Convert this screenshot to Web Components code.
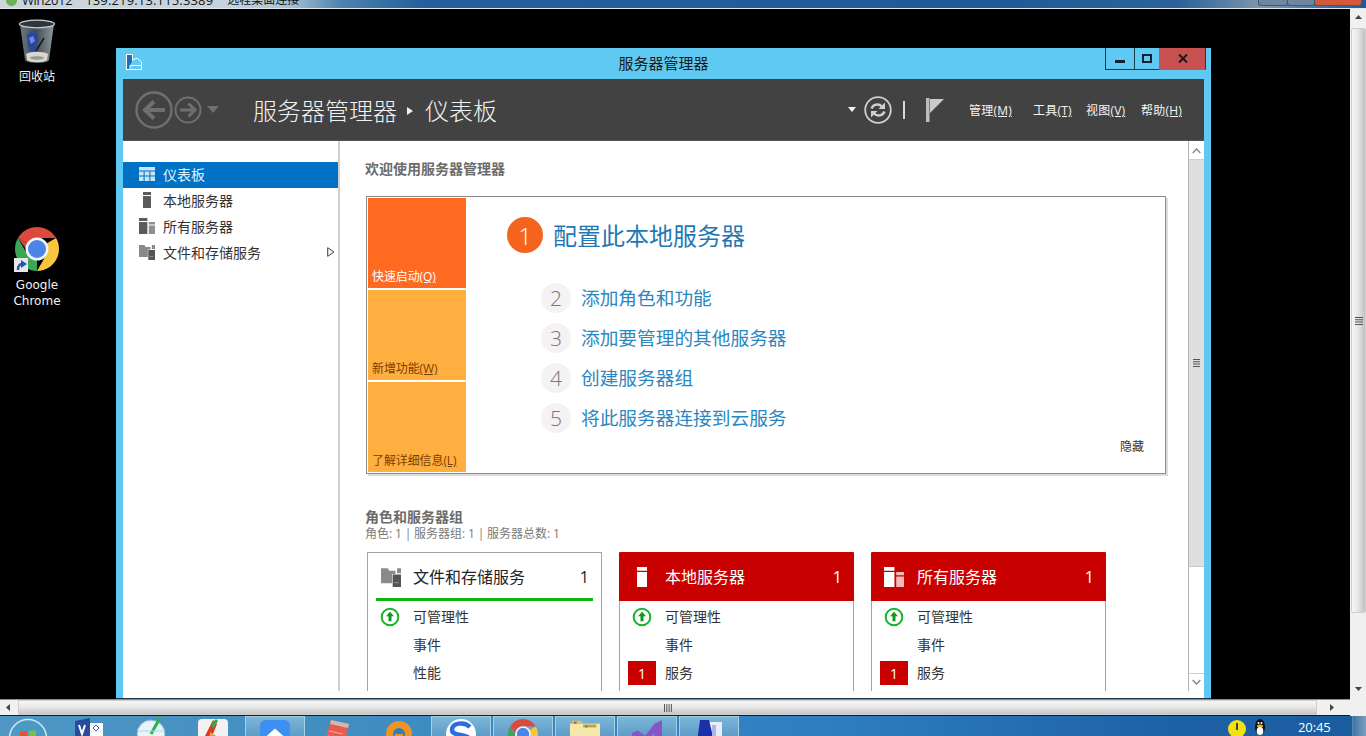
<!DOCTYPE html>
<html lang="zh-CN">
<head>
<meta charset="utf-8">
<title>服务器管理器</title>
<style>
html,body{margin:0;padding:0;background:#000;overflow:hidden}
body{font-family:"Open Sans","Noto Sans CJK SC",sans-serif}
</style>
</head>
<body>
<x-screen>
  <x-rdp-bar slot="top">
    <span>Win2012</span><span>139.219.13.115:3389</span><span>远程桌面连接</span>
  </x-rdp-bar>

  <x-desktop slot="desktop">
    <x-desktop-icon icon="bin" style="left:2px;top:8px" width="70">回收站</x-desktop-icon>
    <x-desktop-icon icon="chrome" shortcut style="left:2px;top:214px" width="70">Google<br>Chrome</x-desktop-icon>

    <x-window title-text="服务器管理器">
      <x-app-header>
        <span slot="a">服务器管理器</span>
        <span slot="b">仪表板</span>
        <x-menu-item slot="menu" w="64">管理<u>(M)</u></x-menu-item>
        <x-menu-item slot="menu" w="53">工具<u>(T)</u></x-menu-item>
        <x-menu-item slot="menu" w="55">视图<u>(V)</u></x-menu-item>
        <x-menu-item slot="menu" w="44">帮助<u>(H)</u></x-menu-item>
      </x-app-header>
      <x-app-body>
        <x-sidebar slot="side">
          <x-nav-item icon="grid" selected>仪表板</x-nav-item>
          <x-nav-item icon="server">本地服务器</x-nav-item>
          <x-nav-item icon="servers">所有服务器</x-nav-item>
          <x-nav-item icon="files" arrow>文件和存储服务</x-nav-item>
        </x-sidebar>
        <x-dashboard slot="main">
          <x-welcome>
            <x-tile slot="tiles" kind="hot">快速启动<u>(Q)</u></x-tile>
            <x-tile slot="tiles">新增功能<u>(W)</u></x-tile>
            <x-tile slot="tiles">了解详细信息<u>(L)</u></x-tile>
            <x-step slot="steps" n="1" primary>配置此本地服务器</x-step>
            <x-step slot="steps" n="2">添加角色和功能</x-step>
            <x-step slot="steps" n="3">添加要管理的其他服务器</x-step>
            <x-step slot="steps" n="4">创建服务器组</x-step>
            <x-step slot="steps" n="5">将此服务器连接到云服务</x-step>
          </x-welcome>
          <x-role-card slot="cards" icon="files" count="1" heading="文件和存储服务">
            <x-card-row status="up">可管理性</x-card-row>
            <x-card-row>事件</x-card-row>
            <x-card-row>性能</x-card-row>
          </x-role-card>
          <x-role-card slot="cards" icon="server" count="1" heading="本地服务器" alert>
            <x-card-row status="up">可管理性</x-card-row>
            <x-card-row>事件</x-card-row>
            <x-card-row badge="1">服务</x-card-row>
          </x-role-card>
          <x-role-card slot="cards" icon="servers" count="1" heading="所有服务器" alert>
            <x-card-row status="up">可管理性</x-card-row>
            <x-card-row>事件</x-card-row>
            <x-card-row badge="1">服务</x-card-row>
          </x-role-card>
        </x-dashboard>
        <x-win-scroll slot="scroll"></x-win-scroll>
      </x-app-body>
    </x-window>
  </x-desktop>

  <x-outer-vscroll slot="vscroll"></x-outer-vscroll>
  <x-outer-hscroll slot="hscroll"></x-outer-hscroll>

  <x-taskbar slot="taskbar">
    <x-task icon="visio" slot="tasks"></x-task>
    <x-task icon="ball" slot="tasks"></x-task>
    <x-task icon="play" slot="tasks"></x-task>
    <x-task icon="diamond" slot="tasks" active></x-task>
    <x-task icon="note" slot="tasks"></x-task>
    <x-task icon="orange" slot="tasks"></x-task>
    <x-task icon="sogou" slot="tasks" active></x-task>
    <x-task icon="chrome" slot="tasks" active></x-task>
    <x-task icon="folder" slot="tasks" active></x-task>
    <x-task icon="vs" slot="tasks" active></x-task>
    <x-task icon="bluebox" slot="tasks" active></x-task>
    <span slot="clock">20:45</span>
  </x-taskbar>
</x-screen>

<script>
const FONT = '"Open Sans","Noto Sans CJK SC",sans-serif';
const CHROME = `<svg viewBox="2 2 44 44" width="100%" height="100%">
<path fill="#db4a3c" d="M4.95 13A22 22 0 0 1 43.05 13H24A11 11 0 0 0 14.47 18.5Z"/>
<path fill="#f6c63f" d="M43.05 13A22 22 0 0 1 24 46L33.53 29.5A11 11 0 0 0 33.53 18.5Z"/>
<path fill="#3aa757" d="M24 46A22 22 0 0 1 4.95 13L14.47 29.5A11 11 0 0 0 24 35Z"/>
<path fill="#db4a3c" d="M4.95 13L14.47 18.5L13 24Z"/>
<circle cx="24" cy="24" r="11.5" fill="#f4f4f4"/><circle cx="24" cy="24" r="9" fill="#4a86e8"/></svg>`;

const ICONS = {
  grid:()=>`<svg viewBox="0 0 16 14" width="16" height="14"><path fill="#c4e6f8" d="M0 0h16v3.4H0zM0 4.4h4.6v4.2H0zM5.600 4.400h4.800v4.200H5.600zM11.400 4.400H16v4.200h-4.600zM0 9.600h4.600V14H0zM5.600 9.600h4.800V14H5.600zM11.400 9.600H16V14h-4.600z"/></svg>`,
  server:(c,w=16,h=16)=>`<svg viewBox="0 0 16 16" width="${w}" height="${h}"><path fill="${c||'#5b5b5b'}" d="M4 0h8v3H4zM4 4h8v12H4z"/></svg>`,
  servers:(c,d,w=16,h=16)=>`<svg viewBox="0 0 18 16" width="${w}" height="${h}" preserveAspectRatio="none"><path fill="${c||'#5b5b5b'}" d="M0 0h9.400v3H0zM0 4h9.400v12H0z"/><path fill="${d||'#8f8f8f'}" d="M11 4h7v2.600h-7zM11 7.600h7V16h-7z"/></svg>`,
  files:(w=16,h=16)=>`<svg viewBox="0 0 18 16" width="${w}" height="${h}" preserveAspectRatio="none"><path fill="#8a8a8a" d="M0 1h6l1.600 2H13v2.500H10V13H0z"/><path fill="#555" d="M10.500 6H18v10h-7.500z"/><path fill="#8a8a8a" d="M14.500 1H18v4h-3.500z"/><path fill="#8a8a8a" d="M12 12h4v1h-4z"/></svg>`,
  bin:()=>`<svg viewBox="0 0 36 46" width="36" height="46">
    <defs><linearGradient id="g" x1="0" x2="1"><stop offset="0" stop-color="#6e7a82"/><stop offset=".45" stop-color="#3f4a52"/><stop offset="1" stop-color="#8d989e"/></linearGradient></defs>
    <path fill="url(#g)" d="M1 5 6 41c1 4 23 4 24 0L35 5z"/>
    <ellipse cx="18" cy="5" rx="17.500" ry="3.800" fill="#2e363c" stroke="#c9d2d6" stroke-width="1.200"/>
    <path fill="#2a479f" d="M8 16l5-4 5 3 2 6-3 4-1 7-5 1-2-7z"/>
    <path fill="#6f8ddc" d="M10 19l4-2 2 5-4 3z"/>
    <path stroke="#14181b" stroke-width="1.500" d="M17 32l8-13" fill="none"/>
    <path fill="#d8d6cf" d="M7 35c4-3 18-3 22 0l-1 6c-2 3-18 3-20 0z"/>
    <path fill="#9a9a94" d="M11 38c4-1 10-1 14 0l-1 2c-4 1-8 1-12 0z"/></svg>`,
  chrome:()=>CHROME,
  visio:()=>`<svg viewBox="0 0 28 28" width="28" height="28"><path fill="#fff" d="M10 5h18v23H10z"/><path fill="#2a4a9c" d="M0 3 15 0v28L0 25z"/><path d="M4 7l3 9 3-9" stroke="#fff" stroke-width="2" fill="none"/><path d="M21 7l3 3-3 3-3-3z" fill="none" stroke="#3a5aa8"/></svg>`,
  ball:()=>`<svg viewBox="0 0 30 30" width="30" height="30"><circle cx="15" cy="16" r="14" fill="#e8f2fa" stroke="#7fb0d0"/><path d="M15 16 24 0" stroke="#28b54a" stroke-width="3"/><path d="M1 13h28" stroke="#b9d4e4"/></svg>`,
  play:()=>`<svg viewBox="0 0 30 30" width="30" height="30"><rect x="0" y="1" width="30" height="29" rx="4" fill="#f2f2f2"/><path fill="#d93a2b" d="M7 18 15 2l4 4-8 20z"/><path fill="#3aa64a" d="M13 6 18 1l2 2-5 8z"/><path fill="#f0a030" d="M12 14l10 6-11 6z"/></svg>`,
  diamond:()=>`<svg viewBox="0 0 32 32" width="32" height="32"><rect width="32" height="32" rx="6" fill="#3d8ff2"/><path fill="#fff" d="M16 9 26 18 16 27 6 18z"/></svg>`,
  note:()=>`<svg viewBox="0 0 26 30" width="26" height="30"><path fill="#e85c50" d="M7 2l18 4-6 24L0 26z"/><path fill="#c9bcb0" d="M7 2l18 4-1 4L6 6z"/><path d="M5 13l14 3M4 18l14 3" stroke="#f5a9a0"/></svg>`,
  orange:()=>`<svg viewBox="0 0 28 30" width="28" height="30"><circle cx="14" cy="16" r="13" fill="#ef9422"/><circle cx="14" cy="16" r="6" fill="#2e7fbb"/><path fill="#ef9422" d="M10 16h8v14h-8z"/></svg>`,
  sogou:()=>`<svg viewBox="0 0 30 30" width="30" height="30"><circle cx="15" cy="15" r="15" fill="#fff"/><path d="M24 8C18 2 6 4 6 11c0 7 18 3 18 11" fill="none" stroke="#2b6ee0" stroke-width="4.500"/></svg>`,
  folder:()=>`<svg viewBox="0 0 32 28" width="32" height="28"><path fill="#f5e8a8" d="M0 4h32v24H0z"/><path fill="#d7c26a" d="M2 1h10l2 3H2z"/><path fill="#b9a25a" d="M14 5h14v3H14z"/><path fill="#5c9a4a" d="M16 6h3v2h-3z"/><path fill="#c8503c" d="M4 2h3v2H4z"/></svg>`,
  vs:()=>`<svg viewBox="0 0 32 28" width="32" height="28"><path fill="#8756c4" d="M0 14l6-3 8 6L24 4l8-4v28h-8V14l-10 11-8-6-6 3z"/></svg>`,
  bluebox:()=>`<svg viewBox="0 0 26 30" width="26" height="30"><path fill="#e8eef8" d="M6 3h20v27H6z"/><path fill="#1a2fa8" d="M4 1h9l7 29H0z"/><path fill="#a8b8e8" d="M16 6h4v20h-4z"/></svg>`
};
const icon=(n,...a)=>ICONS[n](...a);

class Base extends HTMLElement{
  css(){return ''}
  html(){return '<slot></slot>'}
  connectedCallback(){
    if(this.shadowRoot)return;
    const r=this.attachShadow({mode:'open'});
    const t=document.createElement('template');
    t.innerHTML=`<style>${this.css()}</style>${this.html()}`;
    r.appendChild(t.content.cloneNode(true));
  }
}
const sbBtn=(dir,c='#444')=>{
  const pts={up:'0,4 3.5,0 7,4',down:'0,0 3.5,4 7,0',left:'4,0 0,3.5 4,7',right:'0,0 4,3.5 0,7'}[dir];
  return `<svg width="7" height="7" viewBox="0 0 7 7"><polygon points="${pts}" fill="${c}"/></svg>`;
};

customElements.define('x-screen',class extends Base{
  css(){return `:host{display:grid;width:1366px;height:736px;overflow:hidden;background:#000;
    grid-template-columns:1350px 16px;grid-template-rows:9px 690px 17px 20px;color:#222;font-family:${FONT}}
    .top{grid-column:1/3}.tb{grid-column:1/3}
    ::slotted(*){min-width:0}`}
  html(){return `<div class="top"><slot name="top"></slot></div>
    <slot name="desktop"></slot><slot name="vscroll"></slot><slot name="hscroll"></slot>
    <div style="background:#f0f0f0"></div>
    <div class="tb"><slot name="taskbar"></slot></div>`}
});

customElements.define('x-rdp-bar',class extends Base{
  css(){return `:host{display:block;height:9px;overflow:hidden;position:relative;box-sizing:border-box;border-bottom:1px solid #dfe8ef;
    background:linear-gradient(90deg,#cbd5db 0,#c6d3dc 230px,#a9bfd2 290px,#4f82b0 340px,#23609c 420px,#1f5a96 1000px,#2c6299 1180px,#7d95ad 1260px,#1f5a96 1366px)}
    .row{display:flex;align-items:center;height:18px;margin-top:-9px;padding-left:6px;color:#141414;font-size:13px;line-height:18px;white-space:nowrap}
    .ic{width:11px;height:11px;border-radius:50%;background:#6fae5a;margin-right:5px;flex:none}
    ::slotted(span:nth-child(1)){letter-spacing:-.4px}
    ::slotted(span:nth-child(2)){margin-left:13px;letter-spacing:.15px}
    ::slotted(span:nth-child(3)){margin-left:14px;font-size:12px}
    .btns{position:absolute;right:4px;top:-1px;display:flex;height:8px}
    .btns i{display:block;height:6px;border:1px solid #47586c;border-top:0;background:#6f86a0;border-radius:0 0 3px 3px;margin-left:-1px}
    .btns i.c{background:#d2593a}`}
  html(){return `<div class="row"><i class="ic"></i><slot></slot></div>
    <div class="btns"><i style="width:28px"></i><i style="width:26px"></i><i class="c" style="width:46px"></i></div>`}
});

customElements.define('x-desktop',class extends Base{
  css(){return `:host{display:block;position:relative;background:#000;overflow:hidden}`}
});

customElements.define('x-desktop-icon',class extends Base{
  css(){return `:host{position:absolute;display:flex;flex-direction:column;align-items:center;width:70px;color:#f2f2f2;
    font:12px/16px "DejaVu Sans","Noto Sans CJK SC",sans-serif;text-align:center}
    .pic{position:relative;height:46px;width:44px;display:flex;justify-content:center}
    .pic.c{margin-top:4px}
    .pic.c .logo{width:44px;height:44px}
    .pic.b{margin-top:2px}
    .sc{position:absolute;left:-1px;top:31px;width:14px;height:14px;background:#e8e8e8;display:flex;align-items:center;justify-content:center}`}
  html(){
    const n=this.getAttribute('icon'), sc=this.hasAttribute('shortcut');
    return `<div class="pic ${n==='chrome'?'c':'b'}"><div class="logo">${icon(n)}</div>
      ${sc?`<div class="sc"><svg width="11" height="11" viewBox="0 0 11 11"><path d="M2 10C2 5 4 4 7 4" fill="none" stroke="#2456b8" stroke-width="2.4"/><path d="M5 0l6 4-6 4z" fill="#2456b8"/></svg></div>`:''}</div>
      <div style="margin-top:4px"><slot></slot></div>`}
});

customElements.define('x-window',class extends Base{
  css(){return `:host{position:absolute;left:116px;top:39px;width:1095px;height:651px;box-sizing:border-box;
    display:flex;flex-direction:column;background:#5fc9f1;border-bottom:1px solid #16344c;font-family:${FONT}}
    .bar{height:31px;flex:none;display:grid;grid-template-columns:1fr auto 1fr;padding:0 5px;box-sizing:border-box}
    .ic{margin:6px 0 0 4px;width:18px;height:18px}
    .t{font-size:15px;line-height:30px;color:#1a1a1a}
    .btn{display:flex;justify-content:flex-end;align-items:flex-start}
    .btn b{display:flex;align-items:center;justify-content:center;height:22px;box-sizing:border-box;border:1px solid #17384f;border-top:0;margin-left:-1px}
    .btn .x{background:#c75050;border-color:#c75050;border-right-color:#17384f;width:47px;color:#1a1a1a}
    .in{flex:1;min-height:0;margin:0 7px;display:flex;flex-direction:column;overflow:hidden}`}
  html(){return `<div class="bar">
      <div class="ic"><svg width="17" height="17" viewBox="0 0 17 17"><rect x="1.5" y=".5" width="6" height="15" fill="#1d6fb5" stroke="#fff"/><path d="M8 6l3-1.500h1.500L16.500 8v7.500H5V11" fill="#5fc9f1" stroke="#fff"/><path d="M6 11h10v1H6z" fill="#fff"/></svg></div>
      <div class="t">${this.getAttribute('title-text')}</div>
      <div class="btn">
        <b style="width:30px"><svg width="10" height="10"><rect x="0" y="6" width="10" height="3" fill="#0f2233"/></svg></b>
        <b style="width:26px"><svg width="10" height="9"><rect x="1" y="1" width="8" height="7" fill="none" stroke="#0f2233" stroke-width="2"/></svg></b>
        <b class="x"><svg width="10" height="9" viewBox="0 0 10 9"><path d="M1 .5l8 8M9 .5l-8 8" stroke="#1a1a1a" stroke-width="2"/></svg></b>
      </div></div>
      <div class="in"><slot></slot></div>`}
});

customElements.define('x-app-header',class extends Base{
  css(){return `:host{display:flex;align-items:center;height:62px;flex:none;background:#424242;color:#f2f2f2;padding:0 19px 0 12px;box-sizing:border-box;border-bottom:1px solid #555}
    .crumb{display:flex;align-items:center;font-size:24px;font-weight:300;margin-left:34px;line-height:32px;padding-top:2px}
    .sep{margin:0 12px 0 10px;display:flex}
    .right{margin-left:auto;display:flex;align-items:center}
    .menus{display:flex;margin-left:25px;padding-top:3px}
    .nav{display:flex;align-items:center}`}
  html(){return `<div class="nav">
    <svg width="38" height="38" viewBox="0 0 38 38"><circle cx="19" cy="19" r="17.500" fill="none" stroke="#6f6f6f" stroke-width="2.400"/><path d="M30 19H11M19 10.500 10 19l9 8.500" fill="none" stroke="#6f6f6f" stroke-width="4"/></svg>
    <svg style="margin-left:1px" width="28" height="28" viewBox="0 0 28 28"><circle cx="14" cy="14" r="12.500" fill="none" stroke="#6f6f6f" stroke-width="2"/><path d="M6 14h15M14.500 7.500 21 14l-6.500 6.500" fill="none" stroke="#6f6f6f" stroke-width="3"/></svg>
    <svg style="margin-left:5px" width="12" height="7" viewBox="0 0 12 7"><polygon points="0,0 12,0 6,7" fill="#6f6f6f"/></svg>
    </div>
    <div class="crumb"><slot name="a"></slot><span class="sep"><svg width="6" height="8" viewBox="0 0 6 8"><polygon points="0,0 6,4 0,8" fill="#f2f2f2"/></svg></span><slot name="b"></slot></div>
    <div class="right">
      <svg width="8" height="5" viewBox="0 0 8 5"><polygon points="0,0 8,0 4,5" fill="#f2f2f2"/></svg>
      <svg style="margin-left:8px" width="28" height="28" viewBox="0 0 28 28"><circle cx="14" cy="14" r="12.800" fill="none" stroke="#cfcfcf" stroke-width="1.800"/><path d="M7.500 12.500C9 8.500 14.500 7 18 10.500" fill="none" stroke="#cfcfcf" stroke-width="2.400"/><path d="M21 6.500v6.500h-6.500z" fill="#cfcfcf"/><path d="M20.500 15.500C19 19.500 13.500 21 10 17.500" fill="none" stroke="#cfcfcf" stroke-width="2.400"/><path d="M7 21.500V15h6.500z" fill="#cfcfcf"/></svg>
      <svg style="margin-left:11px" width="3" height="18"><rect x="0" width="2" height="18" fill="#d8d8d8"/></svg>
      <svg style="margin-left:20px" width="18" height="24" viewBox="0 0 18 24"><rect x="0" y="0" width="3.500" height="24" fill="#bdbdbd"/><polygon points="4,1 18,1 4,15" fill="#c9c9c9"/></svg>
      <div class="menus"><slot name="menu"></slot></div>
    </div>`}
});

customElements.define('x-menu-item',class extends Base{
  css(){return `:host{display:block;font-size:12px;line-height:18px;color:#f4f4f4;white-space:nowrap;width:${this.getAttribute('w')}px;letter-spacing:.2px}`}
});

customElements.define('x-app-body',class extends Base{
  css(){return `:host{display:grid;grid-template-columns:217px 848px 16px;flex:1;min-height:0;background:#fff;overflow:hidden}`}
  html(){return `<slot name="side"></slot><slot name="main"></slot><slot name="scroll"></slot>`}
});

customElements.define('x-sidebar',class extends Base{
  css(){return `:host{display:block;padding-top:21px;box-sizing:border-box;border-right:2px solid #d0d0d0;width:217px;height:550px}`}
});

customElements.define('x-nav-item',class extends Base{
  css(){const s=this.hasAttribute('selected');return `:host{display:flex;align-items:center;height:26px;box-sizing:border-box;padding-bottom:2px;font-size:14px;color:${s?'#dff3ff':'#333'};background:${s?'#0072c6':'transparent'};position:relative}
    .i{width:40px;display:flex;justify-content:flex-start;padding-left:16px;box-sizing:border-box;flex:none}
    .a{margin-left:auto;margin-right:3px;display:flex}`}
  html(){const n=this.getAttribute('icon');return `<span class="i">${icon(n)}</span><slot></slot>
    ${this.hasAttribute('arrow')?`<span class="a"><svg width="8" height="10" viewBox="0 0 8 10"><polygon points=".7,.7 7,5 .7,9.300" fill="#f4f4f4" stroke="#444"/></svg></span>`:''}`}
});

customElements.define('x-dashboard',class extends Base{
  css(){return `:host{display:block;padding:18px 0 0 25px;box-sizing:border-box;height:550px;overflow:hidden;width:848px}
    h2{margin:0;font-size:14px;line-height:20px;font-weight:700;color:#6b6b6b}
    .wel{margin:17px 0 34px 1px}
    h3{margin:0;font-size:14px;line-height:18px;font-weight:700;color:#6b6b6b}
    p{margin:0;font-size:12px;line-height:16px;color:#7a7a7a;word-spacing:-.3px}
    .cards{display:flex;gap:17px;margin:10px 0 0 2px}`}
  html(){return `<h2>欢迎使用服务器管理器</h2><div class="wel"><slot></slot></div>
    <h3>角色和服务器组</h3><p>角色: 1 | 服务器组: 1 | 服务器总数: 1</p>
    <div class="cards"><slot name="cards"></slot></div>`}
});

customElements.define('x-welcome',class extends Base{
  css(){return `:host{display:flex;width:800px;height:278px;box-sizing:border-box;border:1px solid #8c8c8c;padding:1px;box-shadow:2px 2px 0 #dcdcdc;background:#fff}
    .tiles{display:flex;flex-direction:column;gap:2px;width:98px;flex:none}
    .r{flex:1;display:flex;flex-direction:column;padding:19px 20px 0 41px;min-width:0}
    .h{align-self:flex-end;font-size:12px;line-height:20px;color:#333;margin-top:-1px}`}
  html(){return `<div class="tiles"><slot name="tiles"></slot></div>
    <div class="r"><slot name="steps"></slot><div class="h">隐藏</div></div>`}
});

customElements.define('x-tile',class extends Base{
  css(){const h=this.getAttribute('kind')==='hot';return `:host{display:flex;align-items:flex-end;height:90px;box-sizing:border-box;padding:0 0 2px 4px;font-size:12px;line-height:18px;
    background:${h?'#ff6a21':'#ffaf3f'};color:${h?'#fff':'#7b3d00'};white-space:nowrap;letter-spacing:-.1px}`}
});

customElements.define('x-step',class extends Base{
  css(){const p=this.hasAttribute('primary');return `:host{display:flex;align-items:center;height:${p?36:40}px;${p?'margin-bottom:25px;':'padding-left:34px;'}color:${p?'#1f78b4':'#2a87c0'};font-size:${p?24:18.7}px;white-space:nowrap}
    .n{flex:none;display:flex;align-items:center;justify-content:center;border-radius:50%;font-weight:300;
      width:${p?36:30}px;height:${p?36:30}px;margin-right:10px;background:${p?'#f4641f':'#f4f2f2'};color:${p?'#fff':'#777'};font-size:${p?24:21}px}
    .l{margin-top:${p?-2:-4}px}`}
  html(){return `<span class="n">${this.getAttribute('n')}</span><span class="l"><slot></slot></span>`}
});

customElements.define('x-role-card',class extends Base{
  css(){const a=this.hasAttribute('alert');return `:host{display:block;width:235px;height:200px;box-sizing:border-box;border:1px solid #a3a3a3;background:#fff;flex:none;${a?'border-top-color:#c80000;':''}}
    .h{height:48px;margin:0 ${a?'-1px':'0'};display:flex;align-items:center;position:relative;box-sizing:border-box;padding:0 12px;
       background:${a?'#c80000':'#fff'};color:${a?'#fff':'#222'};font-size:16px}
    .h .ic{width:${a?34:33}px;box-sizing:border-box;flex:none;display:flex;justify-content:flex-start;padding-left:1px}
    .h .title{flex:1;margin-top:-2px}
    .h .bar{position:absolute;left:8px;right:8px;bottom:0;height:3px;background:#12b312}
    .rows{padding-top:2px}`}
  html(){const a=this.hasAttribute('alert'),n=this.getAttribute('icon');
    const ic=n==='server'?icon('server','#fff',20,20):n==='servers'?icon('servers','#fff','#f5b8b8',20,20):icon('files',20,20);
    return `<div class="h"><span class="ic">${ic}</span><span class="title">${this.getAttribute('heading')}</span><span>${this.getAttribute('count')}</span>${a?'':'<i class="bar"></i>'}</div>
    <div class="rows"><slot></slot></div>`}
});

customElements.define('x-card-row',class extends Base{
  css(){return `:host{display:flex;align-items:center;height:28px;padding-left:8px;font-size:14px;color:#333}
    .s{width:28px;height:24px;margin-right:9px;flex:none;display:flex;align-items:center;justify-content:center}
    .s.b{background:#c80000;color:#fff}
    .l{margin-top:-2px}`}
  html(){const st=this.getAttribute('status'),b=this.getAttribute('badge');
    const inner=st?`<svg width="20" height="20" viewBox="0 0 20 20"><circle cx="10" cy="10" r="8.300" fill="#fff" stroke="#19b32b" stroke-width="2"/><path d="M10 4.800 14 9.300h-2.500v5h-3v-5H6z" fill="#0a9a1e"/></svg>`:(b||'');
    return `<span class="s ${b?'b':''}">${inner}</span><span class="l"><slot></slot></span>`}
});

customElements.define('x-win-scroll',class extends Base{
  css(){return `:host{display:flex;flex-direction:column;height:550px;box-sizing:border-box;border-left:1px solid #b4b4b4;padding-top:1px}
    .b{height:17px;flex:none;display:flex;align-items:center;justify-content:center;background:#fff;border-bottom:1px solid #d0d0d0}
    .t{height:407px;flex:none;background:#dfdfdf;display:flex;align-items:center;justify-content:center;border-bottom:1px solid #c8c8c8;box-sizing:border-box}
    .f{flex:1}
    .d{border-bottom:0;border-top:1px solid #d0d0d0;height:16px;margin-bottom:1px}`}
  html(){return `<div class="b"><svg width="9" height="6" viewBox="0 0 9 6"><path d="M.7 5 4.500 1 8.300 5" fill="none" stroke="#8a8a8a" stroke-width="1.500"/></svg></div>
    <div class="t"><svg width="7" height="8"><path d="M0 0h7v1H0zM0 2.300h7v1H0zM0 4.600h7v1H0zM0 6.900h7v1H0z" fill="#555"/></svg></div>
    <div class="f"></div>
    <div class="b d"><svg width="9" height="6" viewBox="0 0 9 6"><path d="M.7 1 4.500 5 8.300 1" fill="none" stroke="#8a8a8a" stroke-width="1.500"/></svg></div>`}
});

customElements.define('x-outer-vscroll',class extends Base{
  css(){return `:host{display:flex;flex-direction:column;background:#f0f0f0}
    .b{height:18px;flex:none;display:flex;align-items:center;justify-content:center}
    .t{height:585px;flex:none;margin:1px 0 0 1px;background:linear-gradient(90deg,#f6f6f6,#e9e9e9 40%,#c2c2c2);border:1px solid #cfcfcf;box-sizing:border-box;border-radius:2px;display:flex;align-items:center;justify-content:center}
    .f{flex:1}`}
  html(){return `<div class="b">${sbBtn('up')}</div>
    <div class="t"><svg width="8" height="8"><path d="M0 0h8v1H0zM0 2.300h8v1H0zM0 4.600h8v1H0zM0 6.900h8v1H0z" fill="#555"/></svg></div>
    <div class="f"></div><div class="b">${sbBtn('down')}</div>`}
});

customElements.define('x-outer-hscroll',class extends Base{
  css(){return `:host{display:flex;box-sizing:border-box;background:#f0f0f0;border-top:1px solid #7f929f;border-bottom:1px solid #1a1a1a;grid-column:1}
    .b{width:18px;flex:none;display:flex;align-items:center;justify-content:center}
    .t{width:1299px;flex:none;background:linear-gradient(#f6f6f6,#e9e9e9 45%,#c6c6c6);border:1px solid #cfcfcf;box-sizing:border-box;display:flex;align-items:center;justify-content:center}
    .e{flex:1;display:flex;align-items:center;justify-content:center}`}
  html(){return `<div class="b">${sbBtn('left')}</div>
    <div class="t"><svg width="8" height="8"><path d="M0 0h1v8H0zM2.300 0h1v8h-1zM4.600 0h1v8h-1zM6.900 0h1v8h-1z" fill="#555"/></svg></div>
    <div class="e">${sbBtn('right')}</div>`}
});

customElements.define('x-taskbar',class extends Base{
  css(){return `:host{display:flex;height:20px;overflow:hidden;background:linear-gradient(90deg,#4f96c4 0,#3f8cc0 30%,#2f7fc0 60%,#1e62a6 85%,#1a5c9e 100%);color:#fff;position:relative}
    .orb{width:59px;flex:none;position:relative;overflow:hidden}
    .orb svg{position:absolute;left:8px;top:2px}
    .tasks{display:flex;gap:2px;overflow:hidden}
    .tray{margin-left:auto;display:flex;height:20px;overflow:hidden}
    .clock{font-size:13px;line-height:22px;width:60px;padding-left:6px;box-sizing:border-box;margin-left:27px;letter-spacing:-.1px}
    .sd{width:14px;background:linear-gradient(90deg,#3d74a8,#7f9fbd);border-left:1px solid #5d86ac;box-sizing:border-box}`}
  html(){return `<div class="orb"><svg width="40" height="40" viewBox="0 0 40 40"><circle cx="20" cy="20" r="18.500" fill="#4a9ac4" stroke="#d7e9f2" stroke-width="1.500"/><path fill="#e8502f" d="M12 14l7-1v6l-7 1z"/><path fill="#7ac043" d="M21 13l7-1v7l-7 .5z"/><path fill="#3a8fd8" d="M12 22l7-1v6l-7 1z"/><path fill="#f7c52e" d="M21 21l7-.5v7l-7 .5z"/></svg></div>
    <div class="tasks"><slot name="tasks"></slot></div>
    <div class="tray">
      <svg style="margin-top:4px" width="18" height="18" viewBox="0 0 18 18"><circle cx="9" cy="9" r="9" fill="#f2e214"/><path d="M9 3v7" stroke="#444" stroke-width="2"/></svg>
      <svg style="margin:3px 0 0 9px" width="10" height="16" viewBox="0 0 10 16"><ellipse cx="5" cy="8" rx="5" ry="8" fill="#111"/><circle cx="3.500" cy="4" r="1" fill="#fff"/><circle cx="6.500" cy="4" r="1" fill="#fff"/><ellipse cx="5" cy="7" rx="3" ry="1.500" fill="#f2b01e"/><ellipse cx="5" cy="12" rx="3.300" ry="4" fill="#fff"/></svg>
      <div class="clock"><slot name="clock"></slot></div>
      <div class="sd"></div>
    </div>`}
});

customElements.define('x-task',class extends Base{
  css(){const a=this.hasAttribute('active');return `:host{display:flex;justify-content:center;width:60px;height:20px;box-sizing:border-box;overflow:hidden;padding-top:2px;flex:none;
    ${a?'background:linear-gradient(#7db5d8,#5d9dc8);border:1px solid #a8cfe4;border-bottom:0;':''}}
    .w{width:30px;height:30px;display:flex;justify-content:center}`}
  html(){return `<div class="w">${icon(this.getAttribute('icon'))}</div>`}
});
</script>
</body>
</html>
